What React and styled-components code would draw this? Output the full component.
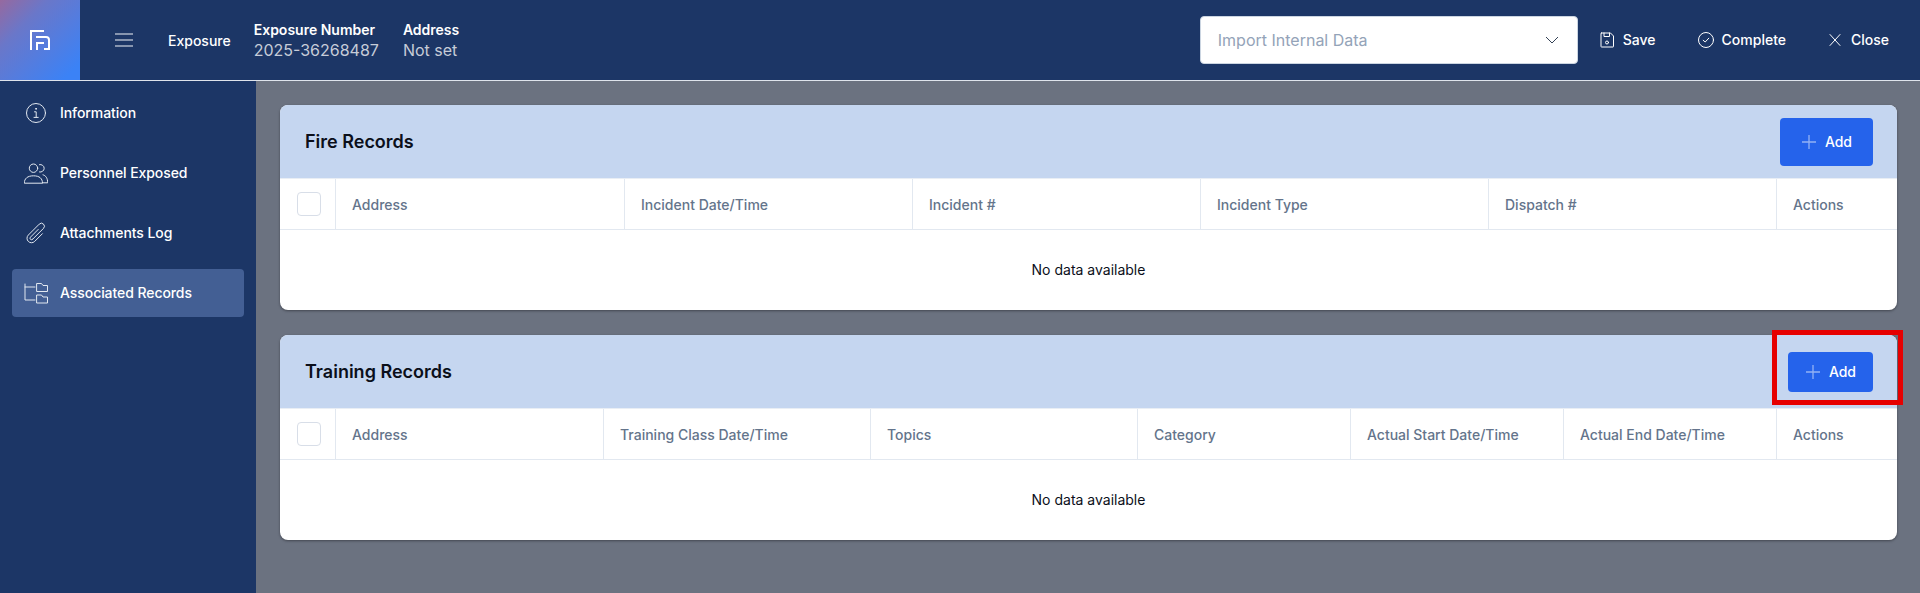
import React from "react";
import styled, { createGlobalStyle } from "styled-components";

const Global = createGlobalStyle`
  html, body { margin: 0; padding: 0; height: 100%; overflow: hidden; }
  body { font-family: Inter, "Liberation Sans", sans-serif; background: #6b7280; }
  #root { height: 100%; }
  * { box-sizing: border-box; }
`;

const Page = styled.div`
  display: flex;
  flex-direction: column;
  height: 593px;
`;

const TopBar = styled.header`
  display: flex;
  align-items: center;
  height: 81px;
  flex: none;
  background: #1c3666;
  border-bottom: 1px solid #dfe4ec;
  color: #fff;
`;

const LogoTile = styled.div`
  width: 80px;
  height: 80px;
  flex: none;
  display: flex;
  align-items: center;
  justify-content: center;
  background: linear-gradient(135deg, #96699f 0%, #6a77c9 30%, #3b82f6 90%);
`;

const MenuButton = styled.div`
  display: flex;
  width: 18px;
  margin-left: 35px;
  flex: none;
`;

const ContextLabel = styled.div`
  margin-left: 35px;
  font-size: 14px;
  font-weight: 500;
  white-space: nowrap;
`;

const InfoBlock = styled.div`
  margin-left: ${(p) => p.$gap}px;
  display: flex;
  flex-direction: column;
  white-space: nowrap;
`;

const InfoLabel = styled.div`
  font-size: 14px;
  line-height: 20px;
  font-weight: 600;
`;

const InfoValue = styled.div`
  font-size: 16px;
  line-height: 20px;
  font-weight: 400;
  color: #c6ccd8;
`;

const TopActions = styled.div`
  margin-left: auto;
  display: flex;
  align-items: center;
  gap: 1px;
  padding-right: 11px;
`;

const ImportSelect = styled.div`
  width: 378px;
  height: 48px;
  display: flex;
  align-items: center;
  justify-content: space-between;
  padding: 0 17px 1px;
  background: #fff;
  border: 1px solid #cbd5e1;
  border-radius: 4px;
  font-size: 16px;
  color: #94a3b8;
`;

const TopButton = styled.div`
  display: flex;
  align-items: center;
  gap: 8px;
  padding: 0 ${(p) => p.$trail || 20}px 1px 20px;
  font-size: 14px;
  font-weight: 500;
  color: #fff;
  white-space: nowrap;
`;

const Body = styled.div`
  display: flex;
  flex: 1;
  min-height: 0;
`;

const Sidebar = styled.nav`
  width: 256px;
  flex: none;
  display: flex;
  flex-direction: column;
  gap: 12px;
  padding: 8px 12px;
  background: #1c3666;
`;

const NavItem = styled.div`
  display: flex;
  align-items: center;
  gap: 12px;
  height: 48px;
  padding: 0 12px 2px;
  border-radius: 4px;
  font-size: 14px;
  font-weight: 500;
  letter-spacing: -0.07px;
  color: #fff;
  background: ${(p) => (p.$active ? "#435f94" : "transparent")};
`;

const NavIcon = styled.span`
  width: 24px;
  height: 24px;
  margin-top: 2px;
  flex: none;
  display: flex;
  color: #e2e8f0;
`;

const Content = styled.main`
  flex: 1;
  min-width: 0;
  display: flex;
  flex-direction: column;
  gap: 25px;
  padding: 24px 23px 0 24px;
  background: #6b7280;
`;

const Card = styled.section`
  background: #fff;
  border-radius: 8px;
  box-shadow: 0 1px 3px rgba(0, 0, 0, 0.25), 0 1px 2px rgba(0, 0, 0, 0.15);
`;

const CardHead = styled.div`
  display: flex;
  align-items: center;
  justify-content: space-between;
  height: 73px;
  padding: 0 24px 0 25px;
  background: #c5d6f0;
  border-radius: 8px 8px 0 0;
`;

const CardTitle = styled.h2`
  margin: 0;
  font-size: 18px;
  font-weight: 600;
  color: #0b0f1a;
`;

const AddSlot = styled.div`
  position: relative;
  display: flex;
`;

const AddButton = styled.div`
  display: flex;
  align-items: center;
  justify-content: center;
  gap: 6px;
  height: ${(p) => (p.$large ? 48 : 40)}px;
  padding: 0 ${(p) => (p.$large ? 21 : 17)}px 0 ${(p) => (p.$large ? 19 : 15)}px;
  background: #2563eb;
  border-radius: 4px;
  font-size: 14px;
  font-weight: 500;
  color: #fff;
`;

const Highlight = styled.div`
  position: absolute;
  top: -22px;
  bottom: -13px;
  left: -16px;
  right: -30px;
  border: 5px solid #e60000;
  pointer-events: none;
`;

const HeaderRow = styled.div`
  display: grid;
  grid-template-columns: ${(p) => p.$columns};
  height: 52px;
  border-top: 1px solid #e9eef5;
  border-bottom: 1px solid #e2e8f0;
`;

const HeaderCell = styled.div`
  display: flex;
  align-items: center;
  padding: 0 16px;
  font-size: 14px;
  font-weight: 500;
  color: #64748b;
  white-space: nowrap;
  border-right: ${(p) => (p.$last ? "none" : "1px solid #e2e8f0")};
`;

const CheckCell = styled.div`
  display: flex;
  align-items: center;
  padding-left: 17px;
  border-right: 1px solid #e2e8f0;
`;

const Checkbox = styled.div`
  width: 24px;
  height: 24px;
  border: 1px solid #d8dee8;
  border-radius: 4px;
  background: #fff;
`;

const EmptyRow = styled.div`
  display: flex;
  align-items: center;
  justify-content: center;
  height: 80px;
  padding-bottom: 2px;
  font-size: 14px;
  color: #0b0f1a;
`;

const Line = ({ size = 24, w = 1, box = 24, children }) => (
  <svg width={size} height={size} viewBox={`0 0 ${box} ${box}`} fill="none" stroke="currentColor" strokeWidth={w} strokeLinecap="round" strokeLinejoin="round">
    {children}
  </svg>
);

const LogoMark = () => (
  <svg width="24" height="24" viewBox="0 0 24 24" fill="none" stroke="#fff" strokeWidth="2">
    <path d="M3 22V3h13" />
    <path d="M9 22v-7h7" />
    <path d="M8 9h10a3 3 0 0 1 3 3v9h-5" />
  </svg>
);

const InfoIcon = () => (
  <Line>
    <circle cx="12" cy="12" r="9.500" />
    <path d="M10.500 10.800h1.700v5.400M10 16.400h4.200" />
    <circle cx="12" cy="7.800" r=".5" fill="currentColor" />
  </Line>
);

const UsersIcon = () => (
  <Line>
    <circle cx="9.500" cy="7.200" r="4.200" />
    <path d="M.3 21.800c0-4.200 3.200-7 9.200-7s9 2.800 9 7z" />
    <path d="M15.500 3.600a3.800 3.800 0 1 1 0 7.400M19 13.800c2.800.7 4.600 3.300 4.700 8h-5.200" />
  </Line>
);

const ClipIcon = () => (
  <Line>
    <path d="m18.375 12.739-7.693 7.693a4.500 4.500 0 0 1-6.364-6.364l10.940-10.940A3 3 0 1 1 19.500 7.372L8.552 18.320m5.688-9.941-7.810 7.810a1.500 1.500 0 0 0 2.122 2.120" />
  </Line>
);

const TreeIcon = () => (
  <Line>
    <path d="M1 3v16h10M1 6h10" />
    <path d="M13 2.500h4.500l1.500 2h4.500v6H13z" />
    <path d="M13 14h4.500l1.500 2h4.500v6H13z" />
  </Line>
);

const MenuIcon = () => (
  <svg width="18" height="14" viewBox="0 0 18 14" fill="none" stroke="#f1f4f8" strokeWidth="1">
    <path d="M0 1h18M0 7h18M0 13h18" />
  </svg>
);

const SaveIcon = () => (
  <Line size={16} box={16}>
    <path d="M2.500 1h9l3 3v10.500a.5.5 0 0 1-.5.5H2.500a.5.5 0 0 1-.5-.5v-13a.5.5 0 0 1 .5-.5z" />
    <path d="M5 1v3.500h5.500V1" />
    <circle cx="8" cy="10.500" r="1.500" />
  </Line>
);

const CheckIcon = () => (
  <Line size={16} box={16}>
    <circle cx="8" cy="8" r="7.500" />
    <path d="m5.200 8.300 2 1.700 3.600-3.800" />
  </Line>
);

const CloseIcon = () => (
  <Line size={16} box={16}>
    <path d="m3 2.500 10 11M13 2.500l-10 11" />
  </Line>
);

const ChevronIcon = () => (
  <svg width="16" height="16" viewBox="0 0 16 16" fill="none" stroke="#334155" strokeWidth="1">
    <path d="m2 5 6 6 6-6" />
  </svg>
);

const PlusIcon = () => (
  <svg width="20" height="20" viewBox="0 0 20 20" fill="none" stroke="#93b2f5" strokeWidth="1.300">
    <path d="M10 3v14M3 10h14" />
  </svg>
);

const NAV = [
  { label: "Information", icon: <InfoIcon /> },
  { label: "Personnel Exposed", icon: <UsersIcon /> },
  { label: "Attachments Log", icon: <ClipIcon /> },
  { label: "Associated Records", icon: <TreeIcon />, active: true },
];

const FIRE = {
  title: "Fire Records",
  large: true,
  columns: "56px 289px repeat(4, 288px) 1fr",
  heads: ["Address", "Incident Date/Time", "Incident #", "Incident Type", "Dispatch #", "Actions"],
};

const TRAINING = {
  title: "Training Records",
  highlighted: true,
  columns: "56px 268px 267px 267px 213px 213px 213px 1fr",
  heads: ["Address", "Training Class Date/Time", "Topics", "Category", "Actual Start Date/Time", "Actual End Date/Time", "Actions"],
};

const RecordCard = ({ title, large, highlighted, columns, heads }) => (
  <Card>
    <CardHead>
      <CardTitle>{title}</CardTitle>
      <AddSlot>
        <AddButton $large={large}>
          <PlusIcon />
          Add
        </AddButton>
        {highlighted && <Highlight />}
      </AddSlot>
    </CardHead>
    <HeaderRow $columns={columns}>
      <CheckCell>
        <Checkbox />
      </CheckCell>
      {heads.map((h, i) => (
        <HeaderCell key={h} $last={i === heads.length - 1}>
          {h}
        </HeaderCell>
      ))}
    </HeaderRow>
    <EmptyRow>No data available</EmptyRow>
  </Card>
);

export default function App() {
  return (
    <Page>
      <Global />
      <TopBar>
        <LogoTile>
          <LogoMark />
        </LogoTile>
        <MenuButton>
          <MenuIcon />
        </MenuButton>
        <ContextLabel>Exposure</ContextLabel>
        <InfoBlock $gap={23}>
          <InfoLabel>Exposure Number</InfoLabel>
          <InfoValue>2025-36268487</InfoValue>
        </InfoBlock>
        <InfoBlock $gap={24}>
          <InfoLabel>Address</InfoLabel>
          <InfoValue>Not set</InfoValue>
        </InfoBlock>
        <TopActions>
          <ImportSelect>
            Import Internal Data
            <ChevronIcon />
          </ImportSelect>
          <TopButton $trail={21}>
            <SaveIcon />
            Save
          </TopButton>
          <TopButton>
            <CheckIcon />
            Complete
          </TopButton>
          <TopButton>
            <CloseIcon />
            Close
          </TopButton>
        </TopActions>
      </TopBar>
      <Body>
        <Sidebar>
          {NAV.map((n) => (
            <NavItem key={n.label} $active={n.active}>
              <NavIcon>{n.icon}</NavIcon>
              {n.label}
            </NavItem>
          ))}
        </Sidebar>
        <Content>
          <RecordCard {...FIRE} />
          <RecordCard {...TRAINING} />
        </Content>
      </Body>
    </Page>
  );
}
